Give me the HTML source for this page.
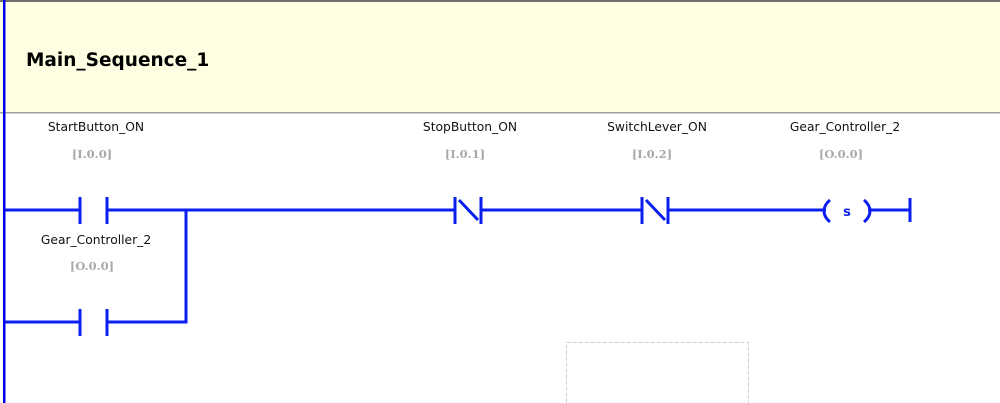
<!DOCTYPE html>
<html><head><meta charset="utf-8"><style>
html,body{margin:0;padding:0;width:1000px;height:403px;overflow:hidden;background:#fff;}
svg{display:block}
.n{font-family:Verdana,"DejaVu Sans",sans-serif;font-size:12.3px;fill:#111}
.a{font-family:"DejaVu Serif",serif;font-weight:bold;font-size:11.5px;fill:#a8a8a8}
</style></head><body>
<svg width="1000" height="403" viewBox="0 0 1000 403">
<rect x="0" y="0" width="1000" height="113" fill="#fefee2"/>
<rect x="0" y="0" width="1000" height="2" fill="#707070"/>
<rect x="0" y="112" width="1000" height="1.5" fill="#a0a0a0"/>
<text x="26" y="66" font-family="Verdana,'DejaVu Sans',sans-serif" font-weight="bold" font-size="18.5" fill="#000">Main_Sequence_1</text>
<rect x="3" y="0" width="2.5" height="403" fill="#0000ee"/>
<g fill="none" stroke="#0a1ef0" stroke-width="3">
<path d="M5 210H80M107 210H455M481 210H642M668 210H826M868 210H910"/>
<path d="M80 197V224M107 197V224M455 197V224M481 197V224M642 197V224M668 197V224M910 198V222"/>
<path d="M459 200L478 220M646 200L665 220"/>
<path d="M5 322H80M107 322H186V210M80 309V336M107 309V336"/>
<path d="M830 200Q824 205 824 211Q824 217 830 222M864 200Q870 205 870 211Q870 217 864 222"/>
</g>
<text x="847" y="216" text-anchor="middle" font-family="Verdana,'DejaVu Sans',sans-serif" font-weight="bold" font-size="13" fill="#0a1ef0">s</text>
<g class="n" text-anchor="middle">
<text x="96" y="131">StartButton_ON</text>
<text x="96" y="244">Gear_Controller_2</text>
<text x="470" y="131">StopButton_ON</text>
<text x="657" y="131">SwitchLever_ON</text>
<text x="845" y="131">Gear_Controller_2</text>
</g>
<g class="a" text-anchor="middle">
<text x="92" y="158">[I.0.0]</text>
<text x="92" y="270">[O.0.0]</text>
<text x="465" y="158">[I.0.1]</text>
<text x="652" y="158">[I.0.2]</text>
<text x="841" y="158">[O.0.0]</text>
</g>
<rect x="566.5" y="342.5" width="182" height="70" fill="none" stroke="#cfcfcf" stroke-dasharray="4 2"/>
</svg>
</body></html>
